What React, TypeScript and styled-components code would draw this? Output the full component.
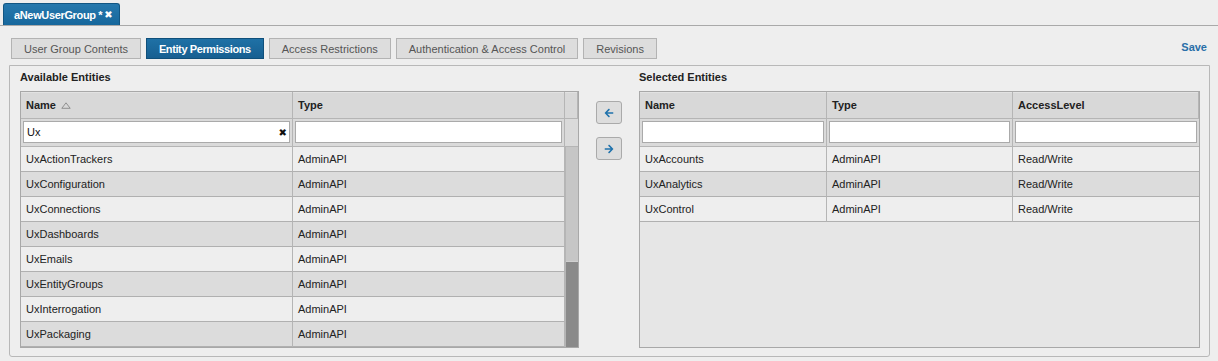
import styled, { createGlobalStyle } from 'styled-components'
import { FaArrowLeft, FaArrowRight } from 'react-icons/fa'

const GlobalStyle = createGlobalStyle`
  * {
    box-sizing: border-box;
  }
  html, body {
    margin: 0;
    padding: 0;
    background: #eeeeee;
    font-family: "Liberation Sans", Arial, Helvetica, sans-serif;
    font-size: 11px;
    color: #222;
  }
`

const available = [
  'UxActionTrackers',
  'UxConfiguration',
  'UxConnections',
  'UxDashboards',
  'UxEmails',
  'UxEntityGroups',
  'UxInterrogation',
  'UxPackaging',
]

const selected = [
  { name: 'UxAccounts', type: 'AdminAPI', access: 'Read/Write' },
  { name: 'UxAnalytics', type: 'AdminAPI', access: 'Read/Write' },
  { name: 'UxControl', type: 'AdminAPI', access: 'Read/Write' },
]

const tabs = [
  'User Group Contents',
  'Entity Permissions',
  'Access Restrictions',
  'Authentication & Access Control',
  'Revisions',
]

const Page = styled.div`
  width: 1218px;
  height: 361px;
  overflow: hidden;
`

/* top document tab strip */
const TabBar = styled.div`
  height: 26px;
  padding: 3px 0 0 3px;
  border-bottom: 1px solid #a9a9a9;
  display: flex;
  align-items: flex-end;
`

const DocTab = styled.div`
  height: 22px;
  padding: 0 6px 0 10px;
  display: flex;
  align-items: center;
  gap: 2px;
  white-space: nowrap;
  color: #fff;
  font-weight: bold;
  font-size: 11px;
  letter-spacing: -0.35px;
  background: linear-gradient(#2678ad, #16679c);
  border: 1px solid #125683;
  border-bottom: none;
  border-radius: 3px 3px 0 0;
`

const Close = styled.span`
  font-family: "DejaVu Sans", sans-serif;
  font-size: 10px;
  letter-spacing: 0;
  line-height: 1;
`

const Toolbar = styled.div`
  height: 39px;
  padding: 12px 10px 0 11px;
  display: flex;
  align-items: flex-start;
`

const Buttons = styled.div`
  display: flex;
  gap: 5px;
`

const TabButton = styled.div<{ $active?: boolean }>`
  height: 21px;
  padding: 0 12px;
  display: flex;
  align-items: center;
  font-size: 11px;
  white-space: nowrap;
  border: 1px solid ${(p) => (p.$active ? '#0f4f7a' : '#b3b3b3')};
  background: ${(p) => (p.$active ? 'linear-gradient(#1f71a6, #175f91)' : '#dddddd')};
  color: ${(p) => (p.$active ? '#fff' : '#555')};
  font-weight: ${(p) => (p.$active ? 'bold' : 'normal')};
  letter-spacing: ${(p) => (p.$active ? '-0.4px' : '0')};
`

const Save = styled.div`
  margin-left: auto;
  margin-right: 1px;
  margin-top: 3px;
  color: #2a6fa8;
  font-weight: bold;
  font-size: 11px;
`

const Panel = styled.div`
  margin-left: 9px;
  width: 1201px;
  height: 292px;
  border: 1px solid #b8b8b8;
  border-radius: 0 0 3px 3px;
  padding: 0 9px 0 10px;
  display: flex;
`

const Section = styled.div<{ $width: number }>`
  width: ${(p) => p.$width}px;
  display: flex;
  flex-direction: column;
`

const SectionTitle = styled.div`
  height: 25px;
  padding-top: 5px;
  font-size: 11px;
  font-weight: bold;
  color: #222;
`

const Grid = styled.div<{ $cols: string; $fill?: boolean }>`
  display: grid;
  grid-template-columns: ${(p) => p.$cols};
  grid-template-rows: 27px 28px repeat(8, 25px);
  border: 1px solid #a8a8a8;
  height: 257px;
  align-content: start;
  background: ${(p) => (p.$fill ? '#e6e6e6' : '#eeeeee')};
`

const HeadCell = styled.div`
  display: flex;
  align-items: center;
  gap: 5px;
  padding-left: 5px;
  font-weight: bold;
  background: #d8d8d8;
  border-right: 1px solid #b5b5b5;
  border-bottom: 1px solid #b5b5b5;
  box-shadow: inset 0 1px 0 #e2e2e2;
  &:last-child {
    border-right: none;
  }
`

const FilterCell = styled.div<{ $last?: boolean }>`
  padding: 2px 2px 3px 2px;
  background: #dadada;
  border-right: ${(p) => (p.$last ? 'none' : '1px solid #b5b5b5')};
  border-bottom: 1px solid #b5b5b5;
`

const FilterInput = styled.div`
  height: 100%;
  background: #fff;
  border: 1px solid #aaa;
  display: flex;
  align-items: center;
  padding: 0 2px 0 3px;
  font-size: 11px;
  color: #111;
`

const Clear = styled.span`
  margin-left: auto;
  font-family: "DejaVu Sans", sans-serif;
  font-size: 10px;
  color: #111;
`

const Cell = styled.div<{ $dark: boolean; $last?: boolean }>`
  display: flex;
  align-items: center;
  padding-left: 5px;
  background: ${(p) => (p.$dark ? '#dcdcdc' : '#eeeeee')};
  border-right: ${(p) => (p.$last ? 'none' : '1px solid #b5b5b5')};
  border-bottom: 1px solid #b0b0b0;
  color: #222;
`

const ScrollTrack = styled.div`
  grid-column: 3;
  grid-row: 3 / span 8;
  background: #c6c6c6;
  border-left: 1px solid #b5b5b5;
  display: flex;
  flex-direction: column;
  justify-content: flex-end;
`

const ScrollThumb = styled.div`
  height: 86px;
  background: #8a8a8a;
  border-top: 1px solid #d0d0d0;
`

const Middle = styled.div`
  width: 61px;
  padding-top: 35px;
  display: flex;
  flex-direction: column;
  align-items: center;
  gap: 13px;
`

const ArrowButton = styled.div`
  width: 26px;
  height: 23px;
  border: 1px solid #aaa;
  border-radius: 3px;
  background: #dddddd;
  display: flex;
  align-items: center;
  justify-content: center;
  color: #1f72ac;
  font-size: 10px;
`

const SortIcon = () => (
  <svg width="10" height="7" viewBox="0 0 10 7">
    <path d="M5 0.8 L9.2 6.3 L0.8 6.3 Z" fill="none" stroke="#888" strokeWidth="0.9" />
  </svg>
)

function App() {
  return (
    <Page>
      <GlobalStyle />
      <TabBar>
        <DocTab>
          aNewUserGroup *<Close>✖</Close>
        </DocTab>
      </TabBar>
      <Toolbar>
        <Buttons>
          {tabs.map((t) => (
            <TabButton key={t} $active={t === 'Entity Permissions'}>{t}</TabButton>
          ))}
        </Buttons>
        <Save>Save</Save>
      </Toolbar>
      <Panel>
        <Section $width={559}>
          <SectionTitle>Available Entities</SectionTitle>
          <Grid $cols="272px 272px 13px">
            <HeadCell>Name <SortIcon /></HeadCell>
            <HeadCell>Type</HeadCell>
            <HeadCell />
            <FilterCell>
              <FilterInput>Ux<Clear>✖</Clear></FilterInput>
            </FilterCell>
            <FilterCell>
              <FilterInput />
            </FilterCell>
            <FilterCell $last />
            {available.map((name, i) => [
              <Cell key={name + 'n'} $dark={i % 2 === 1} style={{ gridColumn: 1 }}>{name}</Cell>,
              <Cell key={name + 't'} $dark={i % 2 === 1} style={{ gridColumn: 2 }}>AdminAPI</Cell>,
            ])}
            <ScrollTrack>
              <ScrollThumb />
            </ScrollTrack>
          </Grid>
        </Section>
        <Middle>
          <ArrowButton><FaArrowLeft /></ArrowButton>
          <ArrowButton><FaArrowRight /></ArrowButton>
        </Middle>
        <Section $width={561}>
          <SectionTitle>Selected Entities</SectionTitle>
          <Grid $cols="187px 186px 186px" $fill>
            <HeadCell>Name</HeadCell>
            <HeadCell>Type</HeadCell>
            <HeadCell>AccessLevel</HeadCell>
            <FilterCell><FilterInput /></FilterCell>
            <FilterCell><FilterInput /></FilterCell>
            <FilterCell $last><FilterInput /></FilterCell>
            {selected.map((r, i) => [
              <Cell key={r.name + 'n'} $dark={i % 2 === 1}>{r.name}</Cell>,
              <Cell key={r.name + 't'} $dark={i % 2 === 1}>{r.type}</Cell>,
              <Cell key={r.name + 'a'} $dark={i % 2 === 1} $last>{r.access}</Cell>,
            ])}
          </Grid>
        </Section>
      </Panel>
    </Page>
  )
}

export default App
